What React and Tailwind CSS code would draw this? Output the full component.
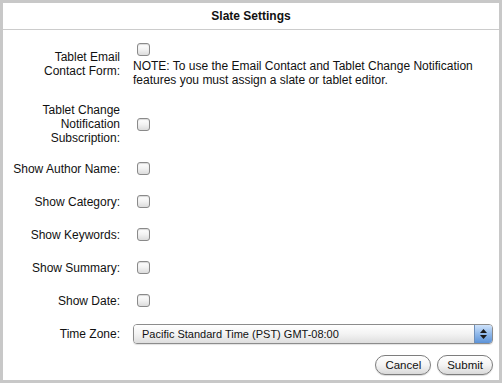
import React from 'react';

function Checkbox() {
  return (
    <span className="block w-[13px] h-[13px] my-[3px] ml-[4px] rounded-[3px] border border-[#8a8a8a] bg-gradient-to-b from-white via-[#f2f2f2] to-[#dcdcdc] shadow-[inset_0_1px_1px_rgba(0,0,0,0.15)]" />
  );
}

function Row({ label, children, className = 'py-[7px]' }) {
  return (
    <div className={`flex items-center ${className}`}>
      <div className="w-[117px] shrink-0 text-right leading-[14px]">{label}</div>
      <div className="ml-[13px] flex-1 leading-[14px]">{children}</div>
    </div>
  );
}

function PillButton({ children }) {
  return (
    <button className="h-[20px] px-[9px] rounded-full border border-[#7d7d7d] bg-gradient-to-b from-white via-[#f4f4f4] to-[#d9d9d9] text-[11.5px] leading-[18px] text-[#111] shadow-[0_1px_1px_rgba(0,0,0,0.15)]">
      {children}
    </button>
  );
}

export default function App() {
  return (
    <div className="w-[502px] h-[383px] border-[3px] border-[#c8c8c8] bg-white flex flex-col font-['Liberation_Sans',Arial,sans-serif] text-[12px] text-[#111]">
      {/* Header */}
      <div className="h-[27px] shrink-0 flex items-center justify-center font-bold border-b border-[#cccccc]">
        Slate Settings
      </div>

      <div className="pt-[3px] pr-[6px] flex flex-col">
        <Row label={<>Tablet Email<br />Contact Form:</>}>
          <Checkbox />
          <p>
            NOTE: To use the Email Contact and Tablet Change Notification
            <br />
            features you must assign a slate or tablet editor.
          </p>
        </Row>
        <Row label={<>Tablet Change<br />Notification<br />Subscription:</>} className="pt-[9px] pb-[7px]">
          <Checkbox />
        </Row>
        <Row label="Show Author Name:"><Checkbox /></Row>
        <Row label="Show Category:"><Checkbox /></Row>
        <Row label="Show Keywords:"><Checkbox /></Row>
        <Row label="Show Summary:"><Checkbox /></Row>
        <Row label="Show Date:"><Checkbox /></Row>
        <Row label="Time Zone:">
          <div className="flex h-[20px] rounded-[4px] border border-[#8c8c8c] overflow-hidden shadow-[0_1px_1px_rgba(0,0,0,0.12)]">
            <div className="flex-1 flex items-center pl-[8px] bg-gradient-to-b from-white via-[#f3f3f3] to-[#dedede] text-[11px] text-[#111]">
              Pacific Standard Time (PST) GMT-08:00
            </div>
            <div className="w-[18px] flex flex-col items-center justify-center gap-[2px] border-l border-[#6f8fb8] bg-gradient-to-b from-[#cfe3fb] via-[#8fb8ea] to-[#5c93d8]">
              <svg width="7" height="4" viewBox="0 0 7 4"><path d="M3.5 0 L7 4 L0 4 Z" fill="#1a1a1a" /></svg>
              <svg width="7" height="4" viewBox="0 0 7 4"><path d="M0 0 L7 0 L3.5 4 Z" fill="#1a1a1a" /></svg>
            </div>
          </div>
        </Row>

        <div className="mt-[4px] flex justify-end gap-[6px]">
          <PillButton>Cancel</PillButton>
          <PillButton>Submit</PillButton>
        </div>
      </div>
    </div>
  );
}
